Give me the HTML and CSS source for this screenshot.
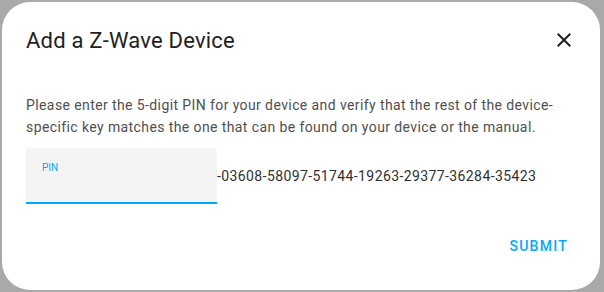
FILE: index.html
```html
<!DOCTYPE html>
<html>
<head>
	<title>Add a Z-Wave Device</title>
	<link rel="stylesheet" href="styles.css">
</head>
<body>
	<div class="dialog">
		<div class="dialog-header">
			<h2>Add a Z-Wave Device</h2>
			<button class="close-btn" aria-label="Close">
				<svg viewBox="0 0 24 24" width="24" height="24"><path d="M19,6.41L17.590,5L12,10.59L6.41,5L5,6.41L10.59,12L5,17.59L6.41,19L12,13.41L17.59,19L19,17.59L13.41,12L19,6.41Z"/></svg>
			</button>
		</div>
		<div class="dialog-content">
			<p>Please enter the 5-digit PIN for your device and verify that the rest of the device-specific key matches the one that can be found on your device or the manual.</p>
			<div class="pin-row">
				<label class="pin-field">
					<span class="pin-label">PIN</span>
					<input type="text" class="pin-input">
				</label>
				<span class="pin-rest">-03608-58097-51744-19263-29377-36284-35423</span>
			</div>
		</div>
		<div class="dialog-actions">
			<button class="submit-btn">Submit</button>
		</div>
	</div>
</body>
</html>
```

FILE: styles.css
```css
/* Page */
body {
	margin: 0;
	padding: 2px;
	background-color: #a9a9a9;
	font-family: Roboto, "Liberation Sans", sans-serif;
}
/* Dialog box */
.dialog {
	width: 598px;
	height: 288px;
	background-color: #fff;
	border-radius: 28px;
	box-sizing: border-box;
	display: flex;
	flex-direction: column;
}
.dialog-header {
	display: flex;
	align-items: center;
	justify-content: space-between;
	padding: 24px 24px 0 24px;
	height: 28px;
}
.dialog-header h2 {
	margin: 0;
	font-size: 22px;
	font-weight: 400;
	letter-spacing: 0.2px;
	color: #212121;
}
.close-btn {
	background: none;
	border: none;
	padding: 0;
	width: 24px;
	height: 24px;
	cursor: pointer;
}
.close-btn svg {
	fill: #212121;
	display: block;
}
/* Content */
.dialog-content {
	padding: 0 24px;
	flex: 1;
}
.dialog-content p {
	margin: 40px 0 0 0;
	font-size: 14px;
	line-height: 22px;
	letter-spacing: 0.4px;
	color: #4f4f4f;
}
.pin-row {
	display: flex;
	align-items: center;
	margin-top: 10px;
}
.pin-field {
	position: relative;
	width: 191px;
	height: 54px;
	background-color: #f4f4f4;
	border-radius: 4px 4px 0 0;
	border-bottom: 2px solid #03a9f4;
}
.pin-label {
	position: absolute;
	left: 16px;
	top: 14px;
	font-size: 10px;
	color: #03a9f4;
}
.pin-input {
	position: absolute;
	left: 16px;
	right: 16px;
	bottom: 8px;
	border: none;
	background: none;
	outline: none;
	font-family: inherit;
	font-size: 14px;
}
.pin-rest {
	font-size: 14px;
	letter-spacing: 0.4px;
	color: #303030;
}
/* Actions */
.dialog-actions {
	display: flex;
	justify-content: flex-end;
	padding: 0 24px 28px 24px;
}
.submit-btn {
	background: none;
	border: none;
	padding: 8px;
	font-family: inherit;
	font-size: 14px;
	font-weight: 500;
	letter-spacing: 1.25px;
	text-transform: uppercase;
	color: #03a9f4;
	cursor: pointer;
}
```
